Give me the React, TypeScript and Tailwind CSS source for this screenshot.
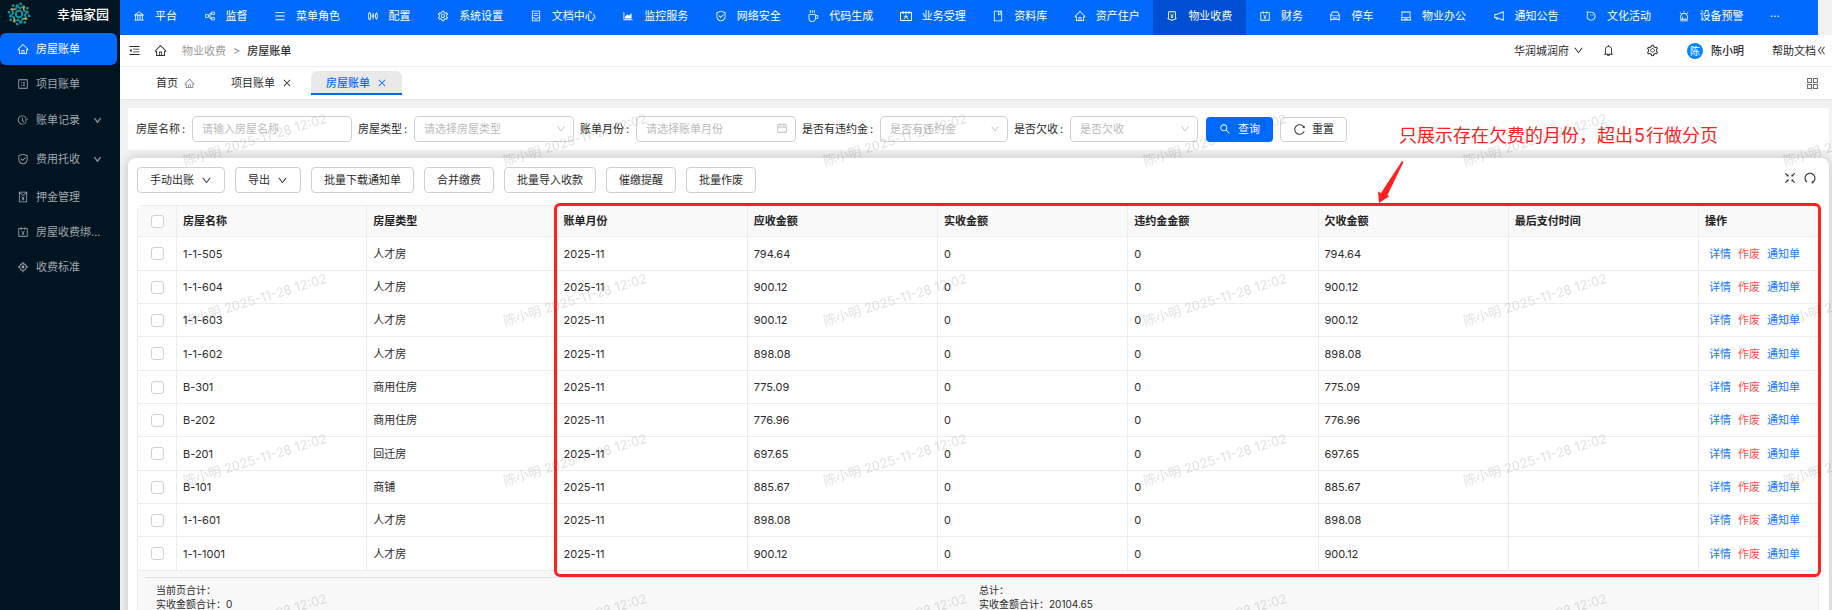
import type { ReactNode } from "react";
import type { IconType } from "react-icons";
import {
  AiOutlineAccountBook,
  AiOutlineAim,
  AiOutlineAlert,
  AiOutlineAliwangwang,
  AiOutlineAppstore,
  AiOutlineAreaChart,
  AiOutlineBank,
  AiOutlineBell,
  AiOutlineBook,
  AiOutlineCalendar,
  AiOutlineCar,
  AiOutlineClose,
  AiOutlineCoffee,
  AiOutlineContainer,
  AiOutlineDoubleLeft,
  AiOutlineDown,
  AiOutlineFieldTime,
  AiOutlineFullscreenExit,
  AiOutlineHome,
  AiOutlineLaptop,
  AiOutlineMenu,
  AiOutlineMenuFold,
  AiOutlineMoneyCollect,
  AiOutlineNotification,
  AiOutlinePartition,
  AiOutlineProfile,
  AiOutlineRedEnvelope,
  AiOutlineRedo,
  AiOutlineReload,
  AiOutlineSafety,
  AiOutlineSearch,
  AiOutlineSetting,
  AiOutlineSliders,
} from "react-icons/ai";

interface NavItem {
  label: string;
  icon: IconType | typeof BusinessIcon;
  active?: boolean;
  expandable?: boolean;
}

function BusinessIcon({ className }: { className?: string }) {
  return (
    <svg viewBox="0 0 12 12" className={className} fill="none" stroke="currentColor">
      <path d="M0.5 2.5h11v8h-11z M3 1v3 M6 1v3 M9 1v3" />
      <path d="M6 4.5v2 M4.2 9.2l1.8-3 1.8 3 M4.2 6.4h3.6" strokeWidth="0.8" />
    </svg>
  );
}

const NAV: NavItem[] = [
  { label: "平台", icon: AiOutlineBank },
  { label: "监督", icon: AiOutlinePartition },
  { label: "菜单角色", icon: AiOutlineMenu },
  { label: "配置", icon: AiOutlineSliders },
  { label: "系统设置", icon: AiOutlineSetting },
  { label: "文档中心", icon: AiOutlineContainer },
  { label: "监控服务", icon: AiOutlineAreaChart },
  { label: "网络安全", icon: AiOutlineSafety },
  { label: "代码生成", icon: AiOutlineCoffee },
  { label: "业务受理", icon: BusinessIcon },
  { label: "资料库", icon: AiOutlineBook },
  { label: "资产住户", icon: AiOutlineHome },
  { label: "物业收费", icon: AiOutlineMoneyCollect, active: true },
  { label: "财务", icon: AiOutlineAccountBook },
  { label: "停车", icon: AiOutlineCar },
  { label: "物业办公", icon: AiOutlineLaptop },
  { label: "通知公告", icon: AiOutlineNotification },
  { label: "文化活动", icon: AiOutlineAliwangwang },
  { label: "设备预警", icon: AiOutlineAlert },
];

const MENU: NavItem[] = [
  { label: "房屋账单", icon: AiOutlineHome, active: true },
  { label: "项目账单", icon: AiOutlineProfile },
  { label: "账单记录", icon: AiOutlineFieldTime, expandable: true },
  { label: "费用托收", icon: AiOutlineSafety, expandable: true },
  { label: "押金管理", icon: AiOutlineRedEnvelope },
  { label: "房屋收费绑...", icon: AiOutlineAccountBook },
  { label: "收费标准", icon: AiOutlineAim },
];

const COLUMNS = [
  "房屋名称",
  "房屋类型",
  "账单月份",
  "应收金额",
  "实收金额",
  "违约金金额",
  "欠收金额",
  "最后支付时间",
];

const BILLS = [
  { name: "1-1-505", type: "人才房", amount: "794.64" },
  { name: "1-1-604", type: "人才房", amount: "900.12" },
  { name: "1-1-603", type: "人才房", amount: "900.12" },
  { name: "1-1-602", type: "人才房", amount: "898.08" },
  { name: "B-301", type: "商用住房", amount: "775.09" },
  { name: "B-202", type: "商用住房", amount: "776.96" },
  { name: "B-201", type: "回迁房", amount: "697.65" },
  { name: "B-101", type: "商铺", amount: "885.67" },
  { name: "1-1-601", type: "人才房", amount: "898.08" },
  { name: "1-1-1001", type: "人才房", amount: "900.12" },
];

function Logo() {
  return (
    <svg viewBox="0 0 24 24" className="size-6" fill="none">
      <circle cx="12" cy="12" r="3.2" stroke="#16939c" strokeWidth="2" />
      {[0, 45, 90, 135, 180, 225, 270, 315].map((angle, i) => (
        <g key={angle} transform={`rotate(${angle + 10} 12 12)`}>
          <circle cx="12" cy="1.8" r="1.4" fill="#16939c" />
          <path d="M8.8 2.8Q9.6 5.6 12 5.8" stroke={i % 2 ? "#d99a3a" : "#16939c"} strokeWidth="1.7" />
          <path d="M15.2 2.8Q14.4 5.6 12 5.8V7" stroke="#16939c" strokeWidth="1.7" />
        </g>
      ))}
    </svg>
  );
}

function Sidebar() {
  return (
    <aside className="w-[120px] shrink-0 bg-[#001421] text-[#a0a8ae]">
      <div className="flex h-[33px] items-start pt-[2px] pl-[7px]">
        <Logo />
        <h1 className="ml-[26px] text-[13px] leading-6 font-medium text-white">幸福家园</h1>
      </div>
      <nav aria-label="侧边菜单" className="flex flex-col">
        {MENU.map(({ label, icon: Icon, active, expandable }) => (
          <a
            key={label}
            href="#"
            className={`mr-[3px] flex h-8 items-center rounded-md pl-[17px] ${
              expandable ? "mt-px mb-[6px]" : "mb-[3px]"
            } ${active ? "bg-[#006aff] text-white" : ""}`}
          >
            <Icon className="size-3 shrink-0" />
            <span className="ml-[7px] whitespace-nowrap">{label}</span>
            {expandable && <AiOutlineDown className="ml-[13px] size-[9px] stroke-[60px]" />}
          </a>
        ))}
      </nav>
    </aside>
  );
}

function TopNav() {
  return (
    <nav
      aria-label="主导航"
      className="mr-[14px] flex h-[35px] shrink-0 overflow-hidden bg-[#006aff] text-white"
    >
      {NAV.map(({ label, icon: Icon, active }) => (
        <a
          key={label}
          href="#"
          className={`flex shrink-0 grow items-center gap-[10px] px-[13px] pb-[3px] whitespace-nowrap ${
            active ? "bg-[#004ed1]" : ""
          }`}
        >
          <Icon className="size-3" />
          {label}
        </a>
      ))}
      <button type="button" aria-label="更多" className="w-[61px] shrink-0 pb-[3px] pl-[13px] text-left">
        ···
      </button>
    </nav>
  );
}

function Header() {
  return (
    <header className="flex h-8 shrink-0 items-center justify-between border-b border-[#f0f0f0] bg-white pr-[5px] pl-2">
      <div className="flex items-center">
        <button type="button" aria-label="收起菜单">
          <AiOutlineMenuFold className="size-[13px]" />
        </button>
        <a href="#" aria-label="首页" className="ml-[13px]">
          <AiOutlineHome className="size-[13px]" />
        </a>
        <a href="#" className="ml-[15px] text-[#999]">物业收费</a>
        <span className="mx-[7px] text-[#888]">&gt;</span>
        <span className="font-medium">房屋账单</span>
      </div>
      <div className="flex items-center">
        <button type="button" className="flex items-center gap-1">
          华润城润府
          <AiOutlineDown className="size-[11px]" />
        </button>
        <button type="button" aria-label="通知" className="ml-[18px]">
          <AiOutlineBell className="size-[13px]" />
        </button>
        <button type="button" aria-label="设置" className="ml-[31px]">
          <AiOutlineSetting className="size-[13px]" />
        </button>
        <button type="button" className="ml-7 flex items-center gap-2 font-medium">
          <span className="flex size-4 items-center justify-center rounded-full bg-[#0085ff] text-[10px] font-normal text-white">
            陈
          </span>
          陈小明
        </button>
        <a href="#" className="ml-7 flex items-center">
          帮助文档
          <AiOutlineDoubleLeft className="size-[11px]" />
        </a>
      </div>
    </header>
  );
}

function PageTabs() {
  return (
    <div className="flex h-[33px] shrink-0 items-center justify-between border-b border-[#e6e6e6] bg-white pr-3 pl-9">
      <div className="flex items-center">
        <button type="button" className="flex items-center gap-[6px]">
          首页
          <AiOutlineHome className="size-[11px] text-[#777]" />
        </button>
        <button type="button" className="ml-9 flex items-center gap-[7px]">
          项目账单
          <AiOutlineClose className="size-[10px]" />
        </button>
        <button
          type="button"
          className="ml-[19px] flex h-6 items-center gap-[7px] rounded-t-md border-b-2 border-[#006aff] bg-[#e9e9e9] px-[15px] pt-[2px] font-medium text-[#006aff]"
        >
          房屋账单
          <AiOutlineClose className="size-[10px]" />
        </button>
      </div>
      <button type="button" aria-label="标签管理">
        <AiOutlineAppstore className="size-[15px] text-[#666]" />
      </button>
    </div>
  );
}

const FIELD =
  "h-[26px] w-full appearance-none rounded border border-[#d0d0d0] bg-white px-[9px] outline-none placeholder:text-[#bbb]";

function Field({ id, label, width, children }: { id: string; label: string; width: string; children: ReactNode }) {
  return (
    <div className="flex items-center">
      <label htmlFor={id} className="flex">
        {label}
        <span className="w-3 pl-[2px]">:</span>
      </label>
      <div className={`relative ${width}`}>{children}</div>
    </div>
  );
}

function SelectField({ id, label, placeholder, width }: { id: string; label: string; placeholder: string; width: string }) {
  return (
    <Field id={id} label={label} width={width}>
      <select id={id} className={`${FIELD} text-[#bbb]`}>
        <option>{placeholder}</option>
      </select>
      <AiOutlineDown className="pointer-events-none absolute top-2 right-2 size-[10px] text-[#bbb]" />
    </Field>
  );
}

function Filters() {
  return (
    <form className="flex h-[42px] shrink-0 items-center gap-[6px] bg-white px-2">
      <Field id="house" label="房屋名称" width="w-[160px]">
        <input id="house" type="text" placeholder="请输入房屋名称" className={FIELD} />
      </Field>
      <SelectField id="type" label="房屋类型" placeholder="请选择房屋类型" width="w-[160px]" />
      <Field id="month" label="账单月份" width="w-[160px]">
        <input id="month" type="text" placeholder="请选择账单月份" className={FIELD} />
        <AiOutlineCalendar className="pointer-events-none absolute top-[6px] right-2 size-3 text-[#bbb]" />
      </Field>
      <SelectField id="penalty" label="是否有违约金" placeholder="是否有违约金" width="w-[128px]" />
      <SelectField id="arrears" label="是否欠收" placeholder="是否欠收" width="w-[128px]" />
      <button
        type="button"
        className="ml-[2px] flex h-[25px] items-center gap-[7px] rounded bg-[#006aff] px-[13px] text-white"
      >
        <AiOutlineSearch className="size-3" />
        查询
      </button>
      <button
        type="button"
        className="ml-px flex h-[25px] items-center gap-[6px] rounded border border-[#d0d0d0] bg-white px-3"
      >
        <AiOutlineReload className="size-[13px]" />
        重置
      </button>
    </form>
  );
}

function ToolButton({ children, dropdown }: { children: ReactNode; dropdown?: boolean }) {
  return (
    <button
      type="button"
      className="flex h-[26px] items-center gap-[7px] rounded border border-[#d0d0d0] bg-white px-3"
    >
      {children}
      {dropdown && <AiOutlineDown className="size-[11px]" />}
    </button>
  );
}

function Toolbar() {
  return (
    <div className="flex items-center justify-between">
      <div className="flex gap-[10px]">
        <ToolButton dropdown>手动出账</ToolButton>
        <ToolButton dropdown>导出</ToolButton>
        <ToolButton>批量下载通知单</ToolButton>
        <ToolButton>合并缴费</ToolButton>
        <ToolButton>批量导入收款</ToolButton>
        <ToolButton>催缴提醒</ToolButton>
        <ToolButton>批量作废</ToolButton>
      </div>
      <div className="flex gap-[6px] pr-[2px] pb-1">
        <button type="button" aria-label="全屏">
          <AiOutlineFullscreenExit className="size-[14px]" />
        </button>
        <button type="button" aria-label="刷新">
          <AiOutlineRedo className="size-[14px]" />
        </button>
      </div>
    </div>
  );
}

function RowCheckbox({ label }: { label: string }) {
  return (
    <input
      type="checkbox"
      aria-label={label}
      className="mx-auto block size-[13px] appearance-none rounded-[3px] border border-[#d0d0d0] bg-white"
    />
  );
}

const CELL = "border-r border-b border-[#ececec] px-[6px]";

function BillTable() {
  return (
    <table className="w-full table-fixed border-separate border-spacing-0 text-left">
      <thead className="bg-[#f9f9f9]">
        <tr className="h-[31px]">
          <th className={`${CELL} w-[39px]`}>
            <RowCheckbox label="全选" />
          </th>
          {COLUMNS.map((column) => (
            <th key={column} className={`${CELL} font-semibold text-[#222]`}>
              {column}
            </th>
          ))}
          <th className={`${CELL} w-[120px] font-semibold text-[#222]`}>操作</th>
        </tr>
      </thead>
      <tbody>
        {BILLS.map((bill) => (
          <tr key={bill.name} className="h-[33px] nth-[3n+1]:h-[34px]">
            <td className={CELL}>
              <RowCheckbox label={bill.name} />
            </td>
            <td className={CELL}>{bill.name}</td>
            <td className={CELL}>{bill.type}</td>
            <td className={CELL}>2025-11</td>
            <td className={CELL}>{bill.amount}</td>
            <td className={CELL}>0</td>
            <td className={CELL}>0</td>
            <td className={CELL}>{bill.amount}</td>
            <td className={CELL} />
            <td className={CELL}>
              <div className="flex gap-[7px] pl-1 whitespace-nowrap text-[#1677ff]">
                <a href="#">详情</a>
                <a href="#" className="text-[#ff4d4f]">作废</a>
                <a href="#">通知单</a>
              </div>
            </td>
          </tr>
        ))}
      </tbody>
    </table>
  );
}

function Totals() {
  return (
    <div className="border-r border-[#ececec] bg-[#f8f8f8] pt-[6px] pl-[7px]">
      <div className="grid grid-cols-2 border-t border-[#e0e0e0] pt-[5px] pr-4 pb-4 pl-[11px] text-[10px] leading-[14px]">
        <p>
          当前页合计：
          <br />
          实收金额合计：0
        </p>
        <p>
          总计：
          <br />
          实收金额合计：20104.65
        </p>
      </div>
    </div>
  );
}

// Review note drawn over the page: red frame, arrow and caption
function ReviewNote() {
  return (
    <div className="pointer-events-none absolute -top-[3px] -right-[2px] left-[416px] h-[374px] rounded-md border-[3px] border-[#ff2020]">
      <p className="absolute right-[100px] bottom-full mb-[56px] text-[18px] leading-7 whitespace-nowrap text-[#ff2020]">
        只展示存在欠费的月份，超出<span className="mx-px">5</span>行做分页
      </p>
      <svg viewBox="0 0 26 44" className="absolute right-[414px] bottom-full mb-px h-11 w-[26px]" fill="#ff2020">
        <path d="M24 0L25.5 1L9.5 34L11 35.5L1 42L0 30.5L3 32Z" />
      </svg>
    </div>
  );
}

function Watermark() {
  return (
    <svg className="pointer-events-none absolute inset-0 size-full" aria-hidden="true">
      <defs>
        <pattern id="watermark" x="50" y="-80" width="320" height="160" patternUnits="userSpaceOnUse">
          <text x="15" y="146" transform="rotate(-17 15 146)" className="fill-black/12 text-[13px]">
            陈小明 2025-11-28 12:02
          </text>
        </pattern>
      </defs>
      <rect width="100%" height="100%" fill="url(#watermark)" />
    </svg>
  );
}

export default function App() {
  return (
    <div className="flex h-screen overflow-hidden bg-[#f2f2f2] font-[Inter,'Noto_Sans_CJK_SC',sans-serif] text-[11px] leading-4 text-[#2b2b2b]">
      <Sidebar />
      <div className="flex min-w-0 flex-1 flex-col">
        <TopNav />
        <Header />
        <PageTabs />
        <main className="relative flex min-h-0 flex-1 flex-col gap-2 overflow-hidden pt-2 pr-[3px] pl-2">
          <Filters />
          <section className="flex-1 rounded-t-lg bg-white pt-[9px] pr-[10px] pl-[9px] shadow-[0_0_12px_rgba(0,0,0,0.2)]">
            <Toolbar />
            <div className="relative mt-3 rounded-tl-md border-t border-l border-[#ececec]">
              <BillTable />
              <Totals />
              <ReviewNote />
            </div>
          </section>
          <Watermark />
        </main>
      </div>
    </div>
  );
}
